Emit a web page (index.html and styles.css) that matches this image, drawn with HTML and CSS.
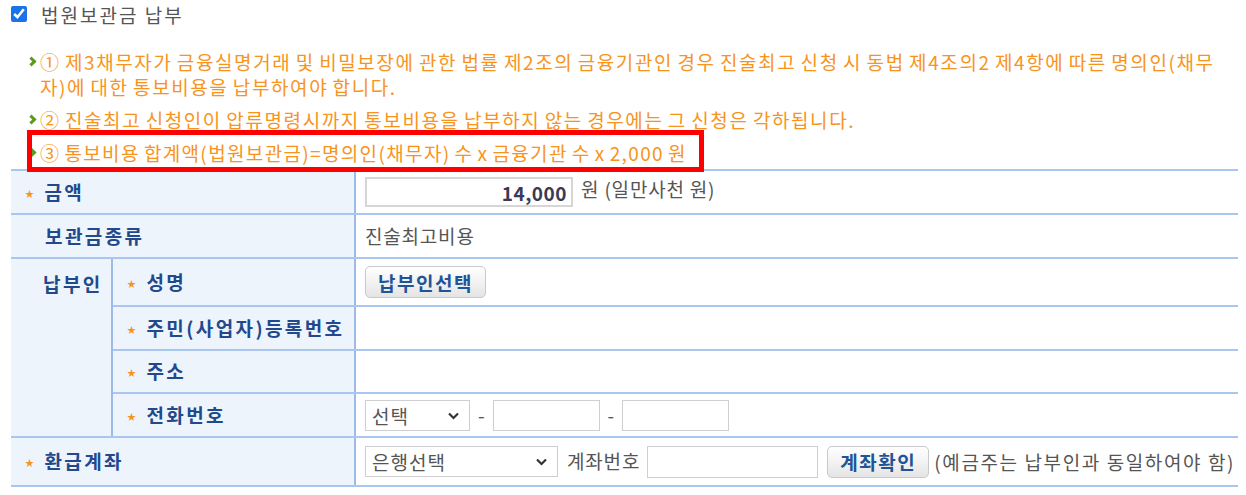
FILE: index.html
```html
<html>
	<head>
		<title>법원보관금 납부</title>
		<link rel="stylesheet" href="styles.css">
	</head>
	<body>
		<div class="pay_head">
			<input type="checkbox" id="pay_check" checked>
			<label for="pay_check">법원보관금 납부</label>
		</div>

		<ul class="notice">
			<li>① 제3채무자가 금융실명거래 및 비밀보장에 관한 법률 제2조의 금융기관인 경우 진술최고 신청 시 동법 제4조의2 제4항에 따른 명의인(채무자)에 대한 통보비용을 납부하여야 합니다.</li>
			<li>② 진술최고 신청인이 압류명령시까지 통보비용을 납부하지 않는 경우에는 그 신청은 각하됩니다.</li>
			<li class="marked">③ 통보비용 합계액(법원보관금)=명의인(채무자) 수 x 금융기관 수 x 2,000 원<span class="red_box"></span></li>
		</ul>

		<table class="pay_table">
			<colgroup>
				<col class="c1">
				<col class="c2">
				<col>
			</colgroup>
			<tr class="r_amount">
				<th colspan="2"><span class="star">★</span>금액</th>
				<td><input type="text" class="amount" value="14,000"> 원 (일만사천 원)</td>
			</tr>
			<tr class="r_kind">
				<th colspan="2" class="no_star">보관금종류</th>
				<td>진술최고비용</td>
			</tr>
			<tr class="r_name">
				<th rowspan="4" class="group">납부인</th>
				<th><span class="star">★</span>성명</th>
				<td><button class="btn">납부인선택</button></td>
			</tr>
			<tr class="r_id">
				<th><span class="star">★</span>주민(사업자)등록번호</th>
				<td></td>
			</tr>
			<tr class="r_addr">
				<th><span class="star">★</span>주소</th>
				<td></td>
			</tr>
			<tr class="r_tel">
				<th><span class="star">★</span>전화번호</th>
				<td>
					<span class="sel sel_tel"><select><option>선택</option></select><svg viewBox="0 0 12 8"><path d="M1.5 1.5 L6 6 L10.5 1.5" fill="none" stroke="#333" stroke-width="2.2"/></svg></span>
					<span class="dash">-</span>
					<input type="text" class="tel">
					<span class="dash">-</span>
					<input type="text" class="tel">
				</td>
			</tr>
			<tr class="r_bank">
				<th colspan="2"><span class="star">★</span>환급계좌</th>
				<td>
					<span class="sel sel_bank"><select><option>은행선택</option></select><svg viewBox="0 0 12 8"><path d="M1.5 1.5 L6 6 L10.5 1.5" fill="none" stroke="#333" stroke-width="2.2"/></svg></span>
					<span class="acc_label">계좌번호</span>
					<input type="text" class="account">
					<button class="btn btn_acc">계좌확인</button>
					<span class="acc_note">(예금주는 납부인과 동일하여야 함)</span>
				</td>
			</tr>
		</table>
	</body>
</html>
```

FILE: styles.css
```css
/* CSS Styling */
body {
	margin: 0;
	padding: 0 8px 0 11px;
	font-family: "Noto Sans CJK KR", "Liberation Sans", sans-serif;
	font-size: 19px;
	color: #555;
	background: #fff;
}

.pay_head {
	height: 28px;
	display: flex;
	align-items: center;
}

.pay_head input {
	width: 16px;
	height: 16px;
	margin: 0 14px 0 0;
	accent-color: #1a73e8;
}

.pay_head label {
	color: #555;
	letter-spacing: 2px;
}

.notice {
	list-style: none;
	margin: 21px 0 0 0;
	padding: 0 0 0 29px;
	width: 1185px;
	color: #f7941d;
	line-height: 25px;
	letter-spacing: 1.6px;
	word-spacing: -1.5px;
	word-break: break-all;
}

.notice li {
	position: relative;
	margin-bottom: 8px;
}

.notice li:before {
	content: "";
	position: absolute;
	left: -12px;
	top: 9px;
	width: 4px;
	height: 4px;
	border-right: 3px solid #5c9a1e;
	border-bottom: 3px solid #5c9a1e;
	transform: rotate(-45deg);
}

.notice li.marked {
	margin-bottom: 4px;
	letter-spacing: 1.35px;
}

.red_box {
	position: absolute;
	left: -13px;
	top: -10px;
	width: 667px;
	height: 32px;
	border: 5px solid #ff0000;
	z-index: 2;
}

.pay_table {
	width: 1227px;
	border-collapse: collapse;
	border-top: 2px solid #9cbbe9;
	border-bottom: 2px solid #9cbbe9;
	font-size: 19px;
	line-height: 1.2;
}

.pay_table col.c1 {
	width: 101px;
}

.pay_table col.c2 {
	width: 243px;
}

.pay_table th, .pay_table td {
	border-top: 2px solid #a9c6ef;
	border-bottom: 2px solid #a9c6ef;
	height: 44px;
	padding: 0;
}

.pay_table th {
	background: #eef4fc;
	color: #22498c;
	font-size: 19px;
	font-weight: bold;
	text-align: left;
	padding-left: 14px;
	letter-spacing: 2.4px;
	white-space: nowrap;
	border-right: 2px solid #9cbbe9;
}

.pay_table th.no_star {
	padding-left: 34px;
}

.pay_table th.group {
	vertical-align: top;
	padding-top: 14px;
	padding-left: 32px;
}

.pay_table td {
	padding-left: 9px;
	color: #555;
	letter-spacing: 0.8px;
}

.star {
	color: #f7941d;
	font-size: 9px;
	vertical-align: 3px;
	margin-right: 8px;
}

.r_name th, .r_name td {
	height: 48px;
}

.r_addr th, .r_addr td {
	height: 43px;
}

.r_tel th, .r_tel td {
	height: 44px;
}

.r_bank th, .r_bank td {
	height: 49px;
}

input[type=text] {
	font-family: "Noto Sans CJK KR", sans-serif;
	font-size: 18px;
	height: 30px;
	box-sizing: border-box;
	border: 1px solid #cfcfcf;
	vertical-align: middle;
	padding: 0 4px;
	outline: none;
}

input.amount {
	width: 208px;
	border: 2px solid #d6d6d6;
	text-align: right;
	font-weight: bold;
	font-size: 19px;
	letter-spacing: 0.5px;
	color: #3a3a55;
	margin-right: 3px;
}

input.tel {
	width: 107px;
	height: 31px;
}

input.account {
	width: 171px;
	height: 32px;
}

.btn {
	font-family: "Noto Sans CJK KR", sans-serif;
	font-size: 19px;
	font-weight: bold;
	letter-spacing: 1.5px;
	color: #1f5497;
	height: 32px;
	padding: 0 12px;
	border: 1px solid #c9c9c9;
	border-radius: 5px;
	background: linear-gradient(#ffffff, #f1f1f1 55%, #e4e4e4);
	vertical-align: middle;
}

.btn_acc {
	margin-left: 4px;
	padding: 0 12px;
}

.sel {
	position: relative;
	display: inline-block;
	vertical-align: middle;
}

.sel select {
	appearance: none;
	-webkit-appearance: none;
	font-family: "Noto Sans CJK KR", sans-serif;
	font-size: 19px;
	letter-spacing: 1px;
	color: #555;
	height: 31px;
	border: 1px solid #cfcfcf;
	border-radius: 0;
	background: #fff;
	padding: 0 0 0 6px;
}

.sel svg {
	position: absolute;
	right: 10px;
	top: 12px;
	width: 13px;
	height: 8px;
}

.sel_tel select {
	width: 105px;
}

.sel_bank select {
	width: 193px;
}

.dash {
	margin: 0 2px 0 3px;
	vertical-align: middle;
}

.acc_label {
	margin: 0 2px 0 4px;
	vertical-align: middle;
}

.acc_note {
	margin-left: 0;
	letter-spacing: 1.6px;
	vertical-align: middle;
}
```
